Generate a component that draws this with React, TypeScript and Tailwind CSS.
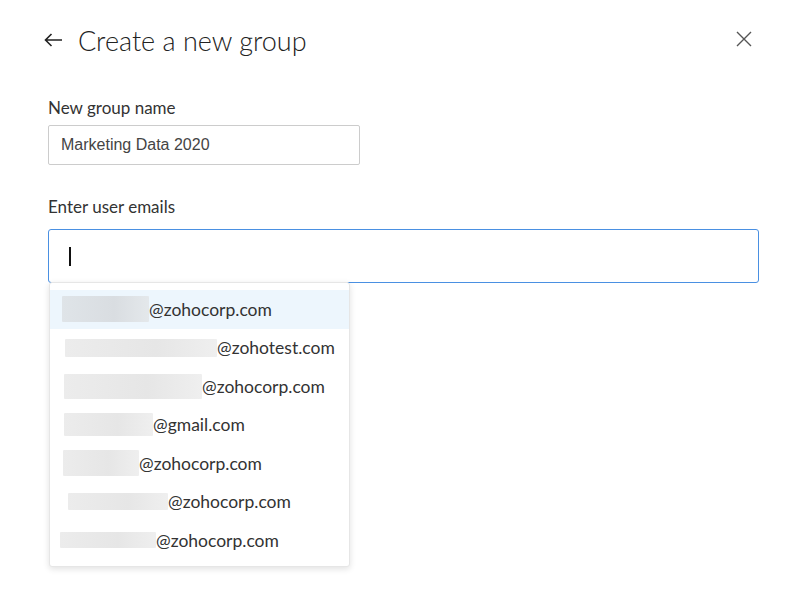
import React from "react";

const rows = [
  { w: 87, ml: 12, h: 26, text: "@zohocorp.com", active: true },
  { w: 152, ml: 15, h: 18, text: "@zohotest.com" },
  { w: 138, ml: 14, h: 25, text: "@zohocorp.com" },
  { w: 89, ml: 14, h: 23, text: "@gmail.com" },
  { w: 76, ml: 13, h: 26, text: "@zohocorp.com" },
  { w: 100, ml: 18, h: 17, text: "@zohocorp.com" },
  { w: 96, ml: 10, h: 16, text: "@zohocorp.com" },
];

export default function App() {
  return (
    <div className="w-[786px] h-[593px] bg-white relative" style={{ fontFamily: "Lato, 'Noto Sans', sans-serif" }}>
      <div className="pt-[20px] pl-[44px] pr-[33px]">
        <div className="flex items-center h-[40px]">
          <svg width="19" height="14" viewBox="0 0 19 14" className="mr-[15px] mt-[-1px]">
            <path d="M18 7H1.5M7.5 1L1.5 7l6 6" stroke="#222" strokeWidth="1.6" fill="none" />
          </svg>
          <h1 className="text-[27px] font-light text-[#222] leading-none">Create a new group</h1>
          <div className="flex-1" />
          <svg width="18" height="18" viewBox="0 0 18 18" className="mt-[-3px]">
            <path d="M2 2L16 16M16 2L2 16" stroke="#555" strokeWidth="1.4" />
          </svg>
        </div>
      </div>
      <div className="pl-[48px] pr-[27px]">
        <div className="mt-[37px] text-[17px] text-[#333] leading-[22px]">New group name</div>
        <div className="mt-[6px] w-[312px] h-[40px] border border-[#ccc] rounded-[2px] flex items-center pl-[12px]">
          <span className="text-[16px] text-[#444]" style={{ fontFamily: "'Liberation Sans', Arial, sans-serif" }}>
            Marketing Data 2020
          </span>
        </div>
        <div className="mt-[31px] text-[17px] text-[#333] leading-[22px]">Enter user emails</div>
        <div className="relative mt-[11px]">
          <div className="w-[711px] h-[54px] border-[1.5px] border-[#4a90e2] rounded-[3px] flex items-center pl-[20px]">
            <div className="w-[1.5px] h-[19px] bg-[#111]" />
          </div>
          <div className="absolute left-[1px] top-[53px] w-[301px] bg-white rounded-[3px] border border-[#e6e6e6] shadow-[0_2px_6px_rgba(0,0,0,0.12)] pt-[7px] pb-[6px]">
            {rows.map((r, i) => (
              <div
                key={i}
                className={`h-[38.5px] flex items-center ${r.active ? "bg-[#edf6fd]" : ""}`}
              >
                <div
                  className="rounded-[1px]"
                  style={{
                    marginLeft: r.ml,
                    width: r.w,
                    height: r.h,
                    background: r.active
                      ? "linear-gradient(90deg,#dfe4e8,#d9dde1 60%,#e4e8eb)"
                      : "linear-gradient(90deg,#ececec,#e6e6e6 60%,#efefef)",
                  }}
                />
                <span className="text-[17.5px] text-[#333] leading-none">{r.text}</span>
              </div>
            ))}
          </div>
        </div>
      </div>
    </div>
  );
}
